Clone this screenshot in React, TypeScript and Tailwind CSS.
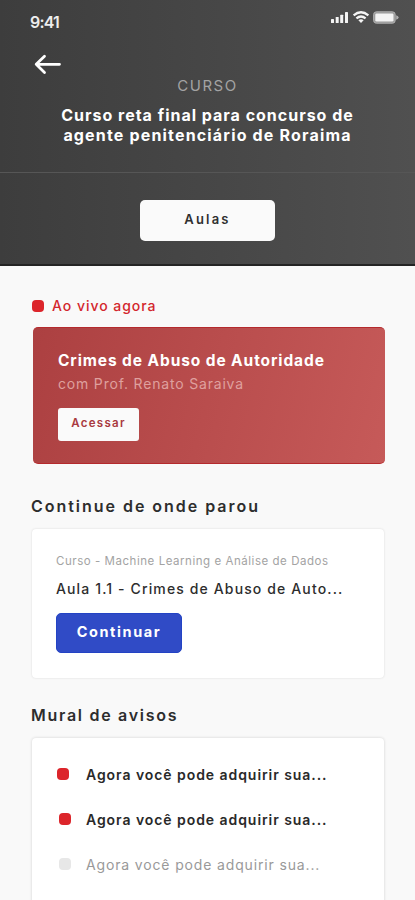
import React from "react";

function StatusIcons() {
  return (
    <svg width="70" height="16" viewBox="0 0 70 16" className="mt-[10px] block">
      <g fill="#f4f4f4">
        <rect x="1" y="9" width="3" height="4" rx="0.6" />
        <rect x="5.7" y="7" width="3" height="6" rx="0.6" />
        <rect x="10.2" y="4.7" width="3" height="8.3" rx="0.6" />
        <rect x="15" y="2" width="3" height="11" rx="0.6" />
      </g>
      <g fill="none" stroke="#f4f4f4" strokeWidth="2.2">
        <path d="M23.6 5.4 Q31 -0.9 38.4 5.4" />
        <path d="M26.4 8.4 Q31 4.6 35.6 8.4" />
      </g>
      <path d="M28.4 10.3 Q31 8.3 33.6 10.3 L31 13 Z" fill="#f4f4f4" />
      <rect x="43.6" y="1.8" width="21.6" height="11.4" rx="2.8" fill="#999" stroke="#b0b0b0" />
      <rect x="45.3" y="3.4" width="18.2" height="8.2" rx="1.4" fill="#f4f4f4" />
      <path d="M66.2 5.2 Q68.6 6 68.6 7.5 Q68.6 9 66.2 9.8 Z" fill="#b0b0b0" />
    </svg>
  );
}

function Header() {
  return (
    <header className="h-[266px] border-b-2 border-[#242424] bg-linear-to-r from-[#3d3d3d] to-[#505050] text-white">
      <div className="flex h-[50px] justify-between pl-[30px] pr-[15px]">
        <span className="mt-3 text-[16px] leading-5 font-semibold tracking-[-0.8px] text-[#ededed]">9:41</span>
        <StatusIcons />
      </div>
      <div className="h-[26px] pl-[34px] pt-1">
        <svg width="28" height="22" viewBox="0 0 28 22" fill="none" stroke="#fff" strokeWidth="2.8" strokeLinecap="round" strokeLinejoin="round">
          <path d="M25.5 10.3H2.2M10.5 2.2L2.2 10.3l8.3 8.1" />
        </svg>
      </div>
      <p className="text-center text-[15px] leading-5 tracking-[1.5px] text-[#a3a3a3]">CURSO</p>
      <h1 className="mt-[9px] text-center text-[16px] leading-5 font-bold">
        <span className="block tracking-[0.99px]">Curso reta final para concurso de</span>
        <span className="block tracking-[1.17px]">agente penitenciário de Roraima</span>
      </h1>
      <div className="mt-[27px] flex justify-center border-t border-[#565656] pt-[27px]">
        <button className="h-[41px] w-[135px] rounded-[5px] bg-[#fafafa] pb-0.5 text-[13px] font-semibold tracking-[2.2px] text-[#303030]">
          Aulas
        </button>
      </div>
    </header>
  );
}

function LiveSection() {
  return (
    <section>
      <div className="flex h-5 items-center gap-2 pl-8 text-[#d3272d]">
        <span className="size-3 rounded-[4px] bg-[#dc252b]" />
        <span className="pb-0.5 text-[14px] font-medium tracking-[0.97px]">Ao vivo agora</span>
      </div>
      <div className="mt-[11px] ml-[33px] h-[137px] w-[352px] rounded-[5px] border-y border-[#b52a2d] bg-linear-[105deg] from-[#ac4041] to-[#c65a59] pt-[23px] pl-[25px]">
        <h2 className="text-[15.5px] leading-5 font-bold tracking-[0.9px] whitespace-nowrap text-white">
          Crimes de Abuso de Autoridade
        </h2>
        <p className="mt-[3px] text-[14px] leading-5 tracking-[0.82px] text-[#dfa09e]">com Prof. Renato Saraiva</p>
        <button className="mt-[14px] block h-[33px] w-[81px] rounded-[3px] bg-[#fafafa] pb-px text-[11.5px] font-semibold tracking-[1.3px] text-[#a83940]">
          Acessar
        </button>
      </div>
    </section>
  );
}

function ContinueSection() {
  return (
    <section className="mt-8">
      <h2 className="pl-[31px] text-[16px] leading-5 font-semibold tracking-[1.97px] text-[#2d2d2d]">Continue de onde parou</h2>
      <div className="mt-[13px] ml-8 h-[149px] w-[352px] rounded-[4px] bg-white pt-[22px] pl-6 shadow-[0_0_2px_#d5d5d5]">
        <p className="text-[11.5px] leading-5 tracking-[0.54px] whitespace-nowrap text-[#a3a3a3]">
          Curso - Machine Learning e Análise de Dados
        </p>
        <p className="mt-2 text-[14px] leading-5 font-medium tracking-[1.13px] whitespace-nowrap text-[#2d2d2d]">
          Aula 1.1 - Crimes de Abuso de Auto...
        </p>
        <button className="mt-[14px] block h-10 w-[126px] rounded-[5px] border border-[#2343c4] bg-[#304bc6] pb-0.5 text-[14.5px] font-bold tracking-[1.6px] text-white">
          Continuar
        </button>
      </div>
    </section>
  );
}

function NoticesSection() {
  return (
    <section className="mt-[27px]">
      <h2 className="pl-[31px] text-[16px] leading-5 font-semibold tracking-[1.72px] text-[#2d2d2d]">Mural de avisos</h2>
      <ul className="mt-[13px] ml-8 flex h-[200px] w-[352px] flex-col gap-[25px] rounded-[4px] bg-white pt-[26px] shadow-[0_0_3px_#d0d0d0]">
        <li className="flex h-5 items-center pl-[25px]">
          <span className="mr-[17px] size-3 rounded-[4px] bg-[#dc252b]" />
          <span className="text-[14px] font-semibold tracking-[0.94px] text-[#292929]">Agora você pode adquirir sua...</span>
        </li>
        <li className="flex h-5 items-center pl-[27px]">
          <span className="mr-[15px] size-3 rounded-[4px] bg-[#dc252b]" />
          <span className="text-[14px] font-semibold tracking-[0.94px] text-[#292929]">Agora você pode adquirir sua...</span>
        </li>
        <li className="flex h-5 items-center pl-[27px]">
          <span className="mr-[15px] size-3 rounded-[4px] bg-[#e7e7e7]" />
          <span className="text-[14px] tracking-[0.85px] text-[#999]">Agora você pode adquirir sua...</span>
        </li>
      </ul>
    </section>
  );
}

export default function App() {
  return (
    <main className="h-[900px] w-[415px] overflow-hidden bg-[#f9f9f9] font-['Inter','Liberation_Sans',sans-serif]">
      <Header />
      <div className="pt-[30px]">
        <LiveSection />
        <ContinueSection />
        <NoticesSection />
      </div>
    </main>
  );
}
